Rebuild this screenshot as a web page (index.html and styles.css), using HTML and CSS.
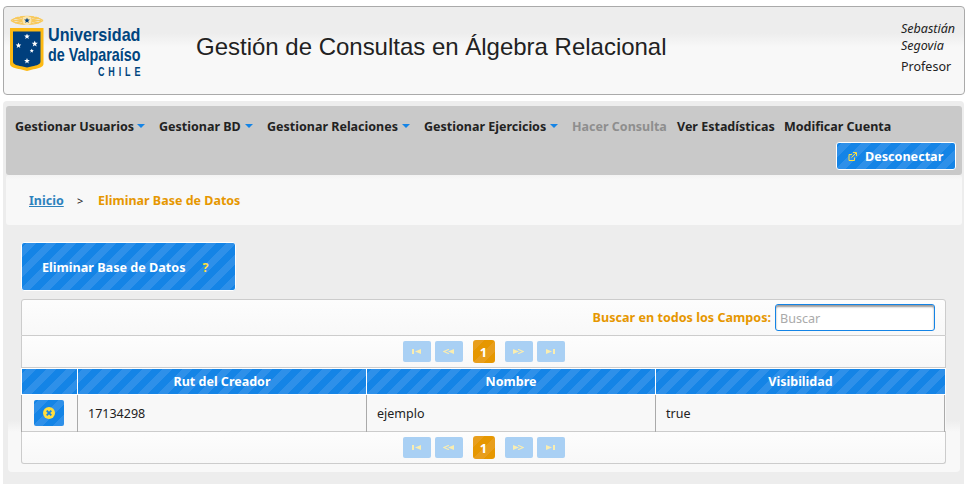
FILE: index.html
```html
<!DOCTYPE html>
<html lang="es">
<head>
<meta charset="utf-8">
<title>Eliminar Base de Datos</title>
<link rel="stylesheet" href="styles.css">
</head>
<body>
<svg class="defs" width="0" height="0" aria-hidden="true">
  <symbol id="first" viewBox="0 0 9 5"><path d="M0 0h2v5H0zM9 0v5L3 2.500z"/></symbol>
  <symbol id="prev" viewBox="0 0 11 5"><path d="M11 0v5L5 2.500z"/><path class="line" d="M6 .3L1 2.500l5 2.200"/></symbol>
  <symbol id="star" viewBox="-5 -5 10 10"><path d="M0-5L1.300-1.600 4.800-1.500 2 .7 3 4.200 0 2.200-3 4.200-2 .7-4.800-1.500-1.300-1.600z"/></symbol>
</svg>
<header class="top">
  <svg class="logo" viewBox="0 0 140 68" width="140" height="68">
    <g fill="none" stroke="#f8c95c" stroke-width="1.300">
      <path d="M1 6.500C8 1 26 1 33 6.500M1 6.500c7 5 25 5 32 0M3 6.500h28M5 4l24 5M5 9l24-5M10 2.500l14 8M10 10.500l14-8"/>
    </g>
    <circle cx="17" cy="6.500" r="4.500" fill="#fbe6ae"/>
    <use href="#star" x="14" y="3.500" width="6" height="6" fill="#004080"/>
    <path fill="#fdb913" d="M0 14h33.500v36c0 3-5 4.500-10 5.200L17 57l-6.500-1.800C5 54.500 0 53 0 50z"/>
    <path fill="#003f7d" d="M3 17.500h27.500v30c0 3-4 4-8 4.700L17 53.500l-5.500-1.300C7 51.500 3 50.500 3 47.500z"/>
    <g fill="#fff">
      <use href="#star" x="14" y="19.500" width="6" height="6"/>
      <use href="#star" x="5.500" y="28.500" width="6" height="6"/>
      <use href="#star" x="21.500" y="26.500" width="6.500" height="6.500"/>
      <use href="#star" x="19.500" y="34.500" width="4.500" height="4.500"/>
      <use href="#star" x="14" y="44" width="6" height="6"/>
    </g>
    <g class="logo-text">
      <text x="38" y="27" font-size="18.500" textLength="92.500" lengthAdjust="spacingAndGlyphs">Universidad</text>
      <text x="38" y="47" font-size="18.500" textLength="92.500" lengthAdjust="spacingAndGlyphs">de Valparaíso</text>
      <text transform="translate(88 61.500) scale(.72 1)" x="0" y="0" font-size="12.500" textLength="59" lengthAdjust="spacing">CHILE</text>
    </g>
  </svg>
  <h1>Gestión de Consultas en Álgebra Relacional</h1>
  <div class="user"><em>Sebastián<br>Segovia</em><span>Profesor</span></div>
</header>
<main class="page">
  <nav class="menu">
    <span class="item drop w1">Gestionar Usuarios</span>
    <span class="item drop w2">Gestionar BD</span>
    <span class="item drop w3">Gestionar Relaciones</span>
    <span class="item drop w4">Gestionar Ejercicios</span>
    <span class="item off w5">Hacer Consulta</span>
    <span class="item w6">Ver Estadísticas</span>
    <span class="item">Modificar Cuenta</span>
    <button class="striped logout"><svg width="9" height="9" viewBox="0 0 9 9"><path d="M4 2.500H1v6h5.500v-3M3.500 5.500L8 1M5 .5h3.500V4"/></svg>Desconectar</button>
  </nav>
  <div class="crumbs"><a>Inicio</a><span>&gt;</span><b>Eliminar Base de Datos</b></div>
  <section class="content">
    <button class="striped title">Eliminar Base de Datos<i>?</i></button>
    <div class="table">
      <div class="search"><label>Buscar en todos los Campos:</label><input placeholder="Buscar"></div>
      <div class="pager">
        <span class="pg"><svg width="9" height="5"><use href="#first"/></svg></span>
        <span class="pg"><svg width="11" height="5"><use href="#prev"/></svg></span>
        <span class="now">1</span>
        <span class="pg flip"><svg width="11" height="5"><use href="#prev"/></svg></span>
        <span class="pg flip"><svg width="9" height="5"><use href="#first"/></svg></span>
      </div>
      <div class="row head"><div class="striped"></div><div class="striped">Rut del Creador</div><div class="striped">Nombre</div><div class="striped">Visibilidad</div></div>
      <div class="row data">
        <div><button class="striped del"><svg width="12" height="12" viewBox="0 0 12 12"><circle cx="6" cy="6" r="6"/><path d="M3.700 3.700l4.600 4.600M8.300 3.700L3.700 8.300"/></svg></button></div>
        <div>17134298</div><div>ejemplo</div><div>true</div>
      </div>
      <div class="pager last">
        <span class="pg"><svg width="9" height="5"><use href="#first"/></svg></span>
        <span class="pg"><svg width="11" height="5"><use href="#prev"/></svg></span>
        <span class="now">1</span>
        <span class="pg flip"><svg width="11" height="5"><use href="#prev"/></svg></span>
        <span class="pg flip"><svg width="9" height="5"><use href="#first"/></svg></span>
      </div>
    </div>
  </section>
</main>
</body>
</html>
```
FILE: styles.css
```css
* { box-sizing: border-box; }
html, body { height: 484px; overflow: hidden; }
body { margin: 0; padding: 6px 2px 0 3px; background: #fff; font: 13px/17px "Noto Sans", "Open Sans", sans-serif; color: #222; }
.defs { position: absolute; }
button { border: 0; padding: 0; font: inherit; font-weight: 700; color: #fff; }
.top { display: flex; height: 89px; margin-right: -1px; border: 1px solid #aaa; border-radius: 4px; background: linear-gradient(#ededed 30%, #f8f8f8 46%); }
.logo { margin: 7px 0 0 6px; flex: none; overflow: visible; }
.logo-text { font-family: "Liberation Sans Narrow", "Liberation Sans", sans-serif; font-weight: 700; fill: #00457f; }
h1 { margin: 25px 0 0 46px; width: 705px; font: 24px/30px "Liberation Sans", sans-serif; letter-spacing: -.01px; flex: none; white-space: nowrap; }
.user { padding-top: 13px; font-size: 12.500px; }
.user span { display: block; margin-top: 4px; }
.page { height: 383px; margin-top: 6px; padding: 5px 2px 0 3px; background: #ededed; border-radius: 4px 4px 0 0; }
.menu { display: flex; flex-wrap: wrap; align-content: flex-start; height: 69px; padding: 12px 6px 0 9px; background: #c9c9c9; border-radius: 3px; font-weight: 700; }
.item { position: relative; white-space: nowrap; font-size: 12.500px; }
.w1 { width: 144px; } .w2 { width: 108px; } .w3 { width: 157px; } .w4 { width: 148px; } .w5 { width: 105px; } .w6 { width: 107px; }
.drop::after { content: ""; position: absolute; right: 14px; top: 6px; border: 4px solid transparent; border-top-color: #1484e6; border-bottom: 0; }
.off { color: #8e8e8e; }
.striped { background: #1484e6 repeating-linear-gradient(135deg, #1484e6 0 3.500px, #2e90e9 3.500px 10.600px, #1484e6 10.600px 14.142px); }
.logout { display: flex; align-items: center; width: 120px; height: 28px; margin: 7px 0 0 auto; padding-left: 11px; border: 1px solid #fff; border-radius: 3px; gap: 8px; font-size: 12.600px; }
.logout svg { fill: none; stroke: #ffde3e; }
.crumbs { display: flex; height: 50px; padding: 17px 0 0 23px; background: linear-gradient(#f3f3f3, #f8f8f8 5px); border-radius: 3px; font-size: 12.500px; font-weight: 700; }
.crumbs a { width: 48px; color: #2e82bd; text-decoration: underline; }
.crumbs span { width: 21px; font-weight: 400; font-size: 11px; }
.crumbs b { color: #e69700; font-weight: 700; }
.content { height: 247px; margin: 0 2px; padding: 17px 14px 0 13px; border-radius: 4px; background: linear-gradient(#ededed 195px, #f8f8f8 207px); }
.title { display: block; width: 215px; height: 49px; border: 1px solid #fff; border-radius: 3px; text-align: left; padding: 2px 0 0 20px; font-size: 12.600px; white-space: nowrap; }
.title i { margin-left: 17px; font-style: normal; color: #ffde3e; }
.table { margin-top: 8px; }
.search { display: flex; justify-content: flex-end; align-items: center; height: 37px; padding: 0 10px; border: 1px solid #ccc; border-radius: 3px 3px 0 0; background: linear-gradient(#fdfdfd, #f8f8f8); font-size: 12.600px; gap: 4px; }
.search label { color: #e69700; font-weight: 700; }
.search input { width: 160px; height: 27px; padding: 2px 4px 0; border: 1px solid #1484e6; border-radius: 3px; font: inherit; box-shadow: inset 0 2px 2px #999; background: #fff; }
.search input::placeholder { color: #aaa; }
.pager { display: flex; justify-content: center; align-items: center; gap: 4px; height: 32px; border: 1px solid #ccc; border-top: 0; background: linear-gradient(#fdfdfd, #f8f8f8); }
.last { border-radius: 0 0 3px 3px; }
.pg { display: flex; justify-content: center; align-items: center; width: 28px; height: 21px; border-radius: 2px; background: #a9d0f4; fill: #f9edb0; }
.flip { transform: scaleX(-1); }
.line { fill: none; stroke: #f9edb0; stroke-width: 1.200; }
.now { width: 22px; height: 23px; margin: 0 6px; border-radius: 3px; background: linear-gradient(135deg, #e89e1c 25%, #e69700 25% 50%, #e89e1c 50% 75%, #e69700 75%); color: #fff; font-weight: 700; line-height: 24px; text-align: center; }
.row { display: grid; grid-template-columns: 56px 289px 289px 290px; }
.head { height: 27px; padding-top: 1px; background: #fff; border-bottom: 1px solid #fff; font-size: 12.500px; font-weight: 700; color: #fff; text-align: center; line-height: 26px; }
.head div { height: 25px; border-left: 1px solid #fff; background-clip: padding-box; }
.data { height: 37px; border-bottom: 1px solid #ccc; background: #f8f8f8; line-height: 37px; font-size: 12.500px; }
.data div { padding-left: 10px; border-left: 1px solid #aaa; }
.data div:last-child { border-right: 1px solid #aaa; }
.del { display: flex; align-items: center; justify-content: center; width: 30px; height: 26px; margin: 5px 0 0 2px; border-radius: 2px; }
.del circle { fill: #ffde3e; } .del path { stroke: #1484e6; stroke-width: 1.800; }
```
